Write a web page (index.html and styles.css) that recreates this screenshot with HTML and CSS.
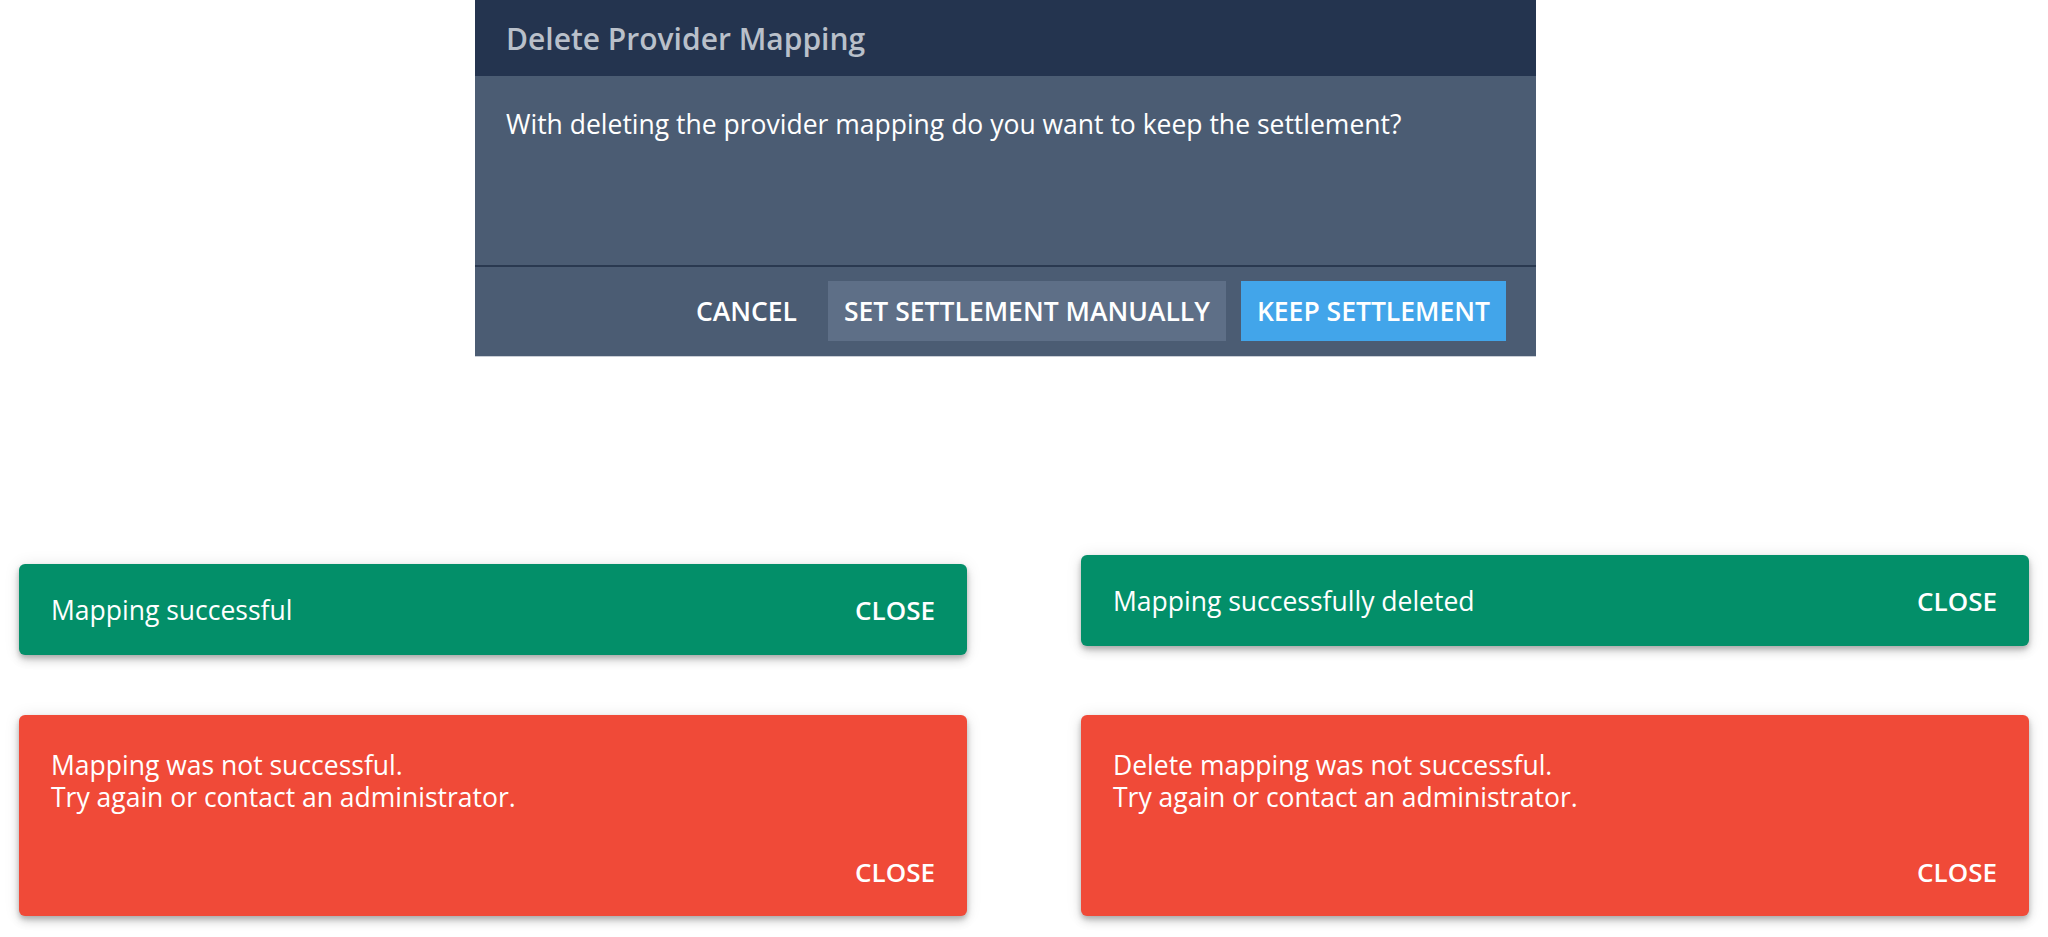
FILE: index.html
```html
<!DOCTYPE html>
<html lang="en">
<head>
<meta charset="utf-8">
<title>Provider Mapping</title>
<link rel="stylesheet" href="styles.css">
</head>
<body>
<div class="page">
  <section class="dialog">
    <header class="dialog-header">Delete Provider Mapping</header>
    <div class="dialog-body">With deleting the provider mapping do you want to keep the settlement?</div>
    <footer class="dialog-footer">
      <button class="btn btn-text">CANCEL</button>
      <button class="btn btn-secondary">SET SETTLEMENT MANUALLY</button>
      <button class="btn btn-primary">KEEP SETTLEMENT</button>
    </footer>
  </section>

  <div class="toasts">
    <div class="toast-col toast-col-left">
      <div class="toast toast-success">
        <span class="toast-text">Mapping successful</span>
        <span class="toast-close">CLOSE</span>
      </div>
      <div class="toast toast-error">
        <span class="toast-text">Mapping was not successful.<br>Try again or contact an administrator.</span>
        <span class="toast-close">CLOSE</span>
      </div>
    </div>
    <div class="toast-col toast-col-right">
      <div class="toast toast-success">
        <span class="toast-text">Mapping successfully deleted</span>
        <span class="toast-close">CLOSE</span>
      </div>
      <div class="toast toast-error">
        <span class="toast-text">Delete mapping was not successful.<br>Try again or contact an administrator.</span>
        <span class="toast-close">CLOSE</span>
      </div>
    </div>
  </div>
</div>
</body>
</html>
```

FILE: styles.css
```css
* { box-sizing: border-box; }
html, body {
  margin: 0;
  padding: 0;
  background: #ffffff;
  font-family: "Open Sans", "Noto Sans", sans-serif;
}
.page {
  width: 2048px;
  height: 937px;
  overflow: hidden;
}
.dialog {
  margin-left: 475px;
  width: 1061px;
  background: #4b5c73;
  border-bottom: 1px solid #c9ced6;
}
.dialog-header {
  height: 76px;
  background: #24344f;
  color: #b9c0ca;
  font-size: 30px;
  font-weight: 600;
  padding: 0 31px;
  display: flex;
  align-items: center;
}
.dialog-body {
  height: 191px;
  padding: 30px 31px;
  color: #ffffff;
  font-size: 26.5px;
  line-height: 36px;
  border-bottom: 2px solid #2a3950;
}
.dialog-footer {
  height: 89px;
  padding: 14px 30px 15px 0;
  display: flex;
  justify-content: flex-end;
  gap: 15px;
}
.btn {
  height: 60px;
  border: 0;
  padding: 0 16px;
  font-family: "Open Sans", "Noto Sans", sans-serif;
  font-size: 26.5px;
  font-weight: 600;
  color: #ffffff;
  background: transparent;
  cursor: pointer;
}
.btn-secondary { background: #5e6f87; }
.btn-primary { background: #42a5ea; }

.toasts {
  display: flex;
  gap: 114px;
  padding-left: 19px;
}
.toast-col {
  width: 948px;
  display: flex;
  flex-direction: column;
}
.toast-col-left { margin-top: 207px; gap: 60px; }
.toast-col-right { margin-top: 198px; gap: 69px; }
.toast {
  border-radius: 6px;
  color: #ffffff;
  font-size: 26.5px;
  line-height: 32px;
  box-shadow: 0 3px 5px rgba(0,0,0,0.2), 0 6px 10px rgba(0,0,0,0.12), 0 1px 16px rgba(0,0,0,0.1);
}
.toast-success {
  height: 91px;
  background: #038f69;
  padding: 0 32px;
  display: flex;
  align-items: center;
  justify-content: space-between;
}
.toast-error {
  height: 201px;
  background: #f04a38;
  padding: 34px 32px 28px;
  display: flex;
  flex-direction: column;
  justify-content: space-between;
}
.toast-close {
  font-size: 26px;
  font-weight: 600;
  align-self: flex-end;
}
.toast-success .toast-close { align-self: center; }
```
